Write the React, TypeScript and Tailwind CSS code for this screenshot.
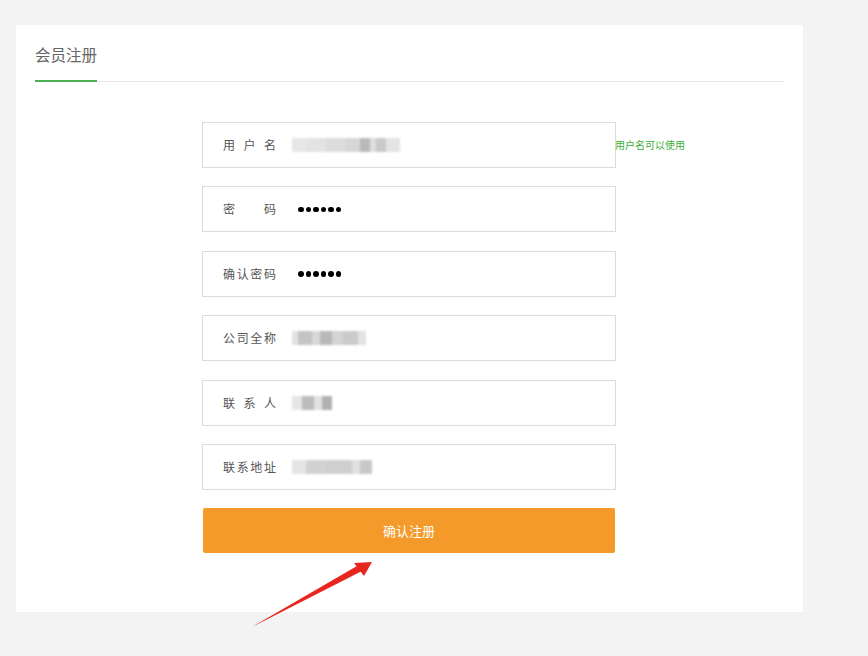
import React from 'react'

const fields = [
  { label: ['用', '户', '名'], value: 'user', hint: '用户名可以使用' },
  { label: ['密', '码'], value: 'dots' },
  { label: ['确', '认', '密', '码'], value: 'dots' },
  { label: ['公', '司', '全', '称'], value: 'company' },
  { label: ['联', '系', '人'], value: 'contact' },
  { label: ['联', '系', '地', '址'], value: 'address' },
]

// blurred placeholder blocks, [width, colour]
const blurred: Record<string, [number, string][]> = {
  user: [
    [14, '#e6e6e6'],
    [20, '#e3e3e3'],
    [20, '#dcdcdc'],
    [14, '#d6d6d6'],
    [10, '#b9b9b9'],
    [6, '#dedede'],
    [10, '#c9c9c9'],
    [14, '#e4e4e4'],
  ],
  company: [
    [6, '#e2e2e2'],
    [14, '#c4c4c4'],
    [8, '#d8d8d8'],
    [12, '#b8b8b8'],
    [10, '#d4d4d4'],
    [16, '#cbcbcb'],
    [8, '#e3e3e3'],
  ],
  contact: [
    [10, '#e6e6e6'],
    [12, '#bcbcbc'],
    [8, '#e2e2e2'],
    [10, '#b1b1b1'],
  ],
  address: [
    [14, '#e5e5e5'],
    [20, '#d2d2d2'],
    [26, '#cfcfcf'],
    [8, '#e0e0e0'],
    [12, '#c8c8c8'],
  ],
}

function Value({ kind }: { kind: string }) {
  if (kind === 'dots') {
    return (
      <div className="flex items-center gap-[2px] pl-[6px]">
        {[0, 1, 2, 3, 4, 5].map((i) => (
          <span key={i} className="w-[5.5px] h-[5.5px] rounded-full bg-black" />
        ))}
      </div>
    )
  }
  return (
    <div className="flex items-center h-[14px] blur-[0.8px]">
      {blurred[kind].map(([w, c], i) => (
        <span key={i} className="h-full" style={{ width: w, background: c }} />
      ))}
    </div>
  )
}

export default function App() {
  return (
    <div
      className="relative min-h-[656px] bg-[#f3f3f4] pt-[25px] pl-4"
      style={{ fontFamily: '"Noto Sans CJK SC", "Noto Sans", sans-serif' }}
    >
      <div className="w-[787px] h-[587px] bg-white">
        <div className="mx-[19px] pt-[17px] border-b border-[#e9e9e9]">
          <div className="inline-block -mb-px border-b-2 border-[#4cae50] pb-[14px] text-[15.5px] leading-[24px] text-[#666]">
            会员注册
          </div>
        </div>

        <div className="flex flex-col items-start pl-[186px] pt-[40px] gap-[18.4px]">
          {fields.map((f, idx) => (
            <div
              key={idx}
              className="relative flex items-center w-[414px] h-[46px] border border-[#dcdcdc] pl-[20px]"
            >
              <div className="flex justify-between w-[53px] text-[12px] text-[#555]">
                {f.label.map((ch, i) => (
                  <span key={i}>{ch}</span>
                ))}
              </div>
              <div className="ml-[16px]">
                <Value kind={f.value} />
              </div>
              {f.hint && (
                <span className="absolute left-full top-[14px] text-[10px] leading-[16px] text-[#3daf3a] whitespace-nowrap">
                  {f.hint}
                </span>
              )}
            </div>
          ))}
          <button className="ml-[1px] w-[412px] h-[45px] rounded-[2px] bg-[#f39a2a] text-white text-[13px]">
            确认注册
          </button>
        </div>
      </div>

      <svg
        className="absolute left-[248px] top-[556px]"
        width="130"
        height="76"
        viewBox="0 0 130 76"
      >
        <polygon points="4,71 109,10 114,15" fill="#e8261f" />
        <polygon points="124,6 106,7 116,20" fill="#e8261f" />
      </svg>
    </div>
  )
}
